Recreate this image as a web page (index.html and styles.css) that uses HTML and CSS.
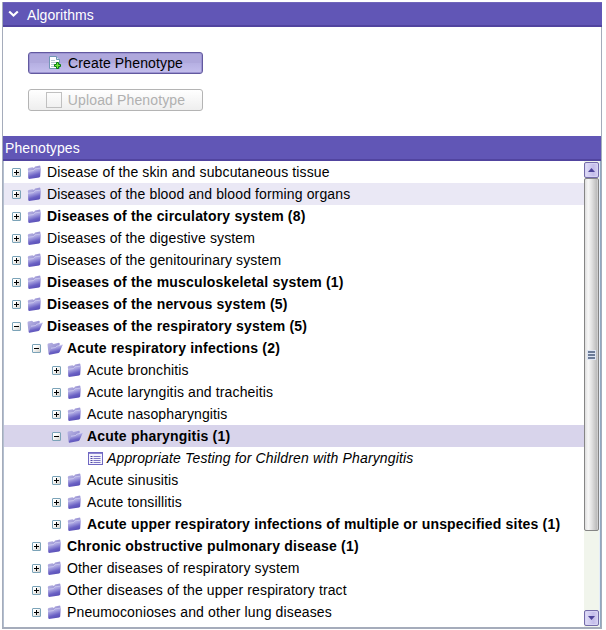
FILE: index.html
```
<!DOCTYPE html>
<html lang="en">
<head>
<meta charset="utf-8">
<title>Phenotypes</title>
<link rel="stylesheet" href="styles.css">
</head>
<body>
<svg class="defs" width="0" height="0" aria-hidden="true">
  <defs>
    <linearGradient id="front" x1="0" y1="0" x2=".35" y2="1"><stop offset="0" stop-color="#c9c6f0"/><stop offset=".4" stop-color="#a7a2e0"/><stop offset=".75" stop-color="#6a61c4"/><stop offset="1" stop-color="#5b51b8"/></linearGradient>
    <linearGradient id="back" x1="0" y1="0" x2="1" y2="1"><stop offset="0" stop-color="#b9b5e4"/><stop offset="1" stop-color="#827ac8"/></linearGradient>
    <linearGradient id="box" x1="0" y1="0" x2="1" y2="1"><stop offset=".3" stop-color="#fff"/><stop offset="1" stop-color="#cfcec8"/></linearGradient>
    <symbol id="closed" viewBox="0 0 16 16"><path d="M.8 5 1.500 4l4-.7L7 4l1-1.600L13 1.500l.5 1.500-.7 9-11 2z" fill="url(#back)"/><path d="M1 7.200 6.500 6.500 8 4.800l5.700-.8-.5 8.500-1 1L2 15l-.7-.8z" fill="url(#front)"/><path d="M1 7.200 6.500 6.500 8 4.800l5.700-.8" fill="none" stroke="#d9d6f5" stroke-width=".6"/></symbol>
    <symbol id="open" viewBox="0 0 16 16"><path d="M.5 4.500 1 3.500l4-.7L6.500 4l5.500-1.200.8.700-.3 2L2.500 14.500l-1-.5z" fill="url(#back)"/><path d="M4 8.200 8.500 7.500 10 6l5.800-1.200L12.500 12.300l-1 .7-9 1.800-.7-.6z" fill="url(#front)"/><path d="M4 8.200 8.500 7.500 10 6l5.800-1.200" fill="none" stroke="#d9d6f5" stroke-width=".6"/></symbol>
    <symbol id="plus" viewBox="0 0 9 9"><rect x=".5" y=".5" width="8" height="8" rx=".5" fill="url(#box)" stroke="#7ba3b8"/><path d="M2 4.500h5M4.500 2v5" stroke="#000"/></symbol>
    <symbol id="minus" viewBox="0 0 9 9"><rect x=".5" y=".5" width="8" height="8" rx=".5" fill="url(#box)" stroke="#7ba3b8"/><path d="M2 4.500h5" stroke="#000"/></symbol>
    <symbol id="list" viewBox="0 0 15 13"><rect x=".5" y=".5" width="14" height="12" fill="#f4f3fc" stroke="#6f67c2"/><path d="M1 1.500h13" stroke="#8e87d0"/><path d="M2.500 4.500h2m-2 2h2m-2 2h2m-2 2h2" stroke="#4a409f"/><path d="M5.500 4.500h7m-7 2h7m-7 2h7m-7 2h7" stroke="#7d76c4"/></symbol>
  </defs>
</svg>
<main class="panel">
  <header class="bar bar-top">
    <svg class="chevron" width="11" height="8" viewBox="0 0 11 8"><path d="m1.200 1.500 4.300 4 4.300-4" fill="none" stroke="#fff" stroke-width="2.200"/></svg>
    <span>Algorithms</span>
  </header>
  <section class="actions">
    <button class="btn btn-primary">
      <svg class="doc" width="14" height="14" viewBox="0 0 14 14"><path d="M1.500.5h7l3 3v9h-10z" fill="#fff" stroke="#7195b5"/><path d="M8.500.5v3h3" fill="#d6e4ef" stroke="#7195b5"/><path d="M3 4.500h4m-4 2h6m-6 2h4m-4 2h3" stroke="#b4c6d4"/><path d="M8.500 6.500h2v2h2v2h-2v2h-2v-2h-2v-2h2z" fill="#72e83c" stroke="#087b13"/></svg>
      <span>Create Phenotype</span>
    </button>
    <button class="btn btn-off" disabled><i class="blank"></i><span>Upload Phenotype</span></button>
  </section>
  <h2 class="bar bar-tree">Phenotypes</h2>
  <div class="content">
    <div class="tree">
      <div class="row"><svg class="tog"><use href="#plus"/></svg><svg class="ico"><use href="#closed"/></svg><span>Disease of the skin and subcutaneous tissue</span></div>
      <div class="row hover"><svg class="tog"><use href="#plus"/></svg><svg class="ico"><use href="#closed"/></svg><span>Diseases of the blood and blood forming organs</span></div>
      <div class="row bold"><svg class="tog"><use href="#plus"/></svg><svg class="ico"><use href="#closed"/></svg><span>Diseases of the circulatory system (8)</span></div>
      <div class="row"><svg class="tog"><use href="#plus"/></svg><svg class="ico"><use href="#closed"/></svg><span>Diseases of the digestive system</span></div>
      <div class="row"><svg class="tog"><use href="#plus"/></svg><svg class="ico"><use href="#closed"/></svg><span>Diseases of the genitourinary system</span></div>
      <div class="row bold"><svg class="tog"><use href="#plus"/></svg><svg class="ico"><use href="#closed"/></svg><span>Diseases of the musculoskeletal system (1)</span></div>
      <div class="row bold"><svg class="tog"><use href="#plus"/></svg><svg class="ico"><use href="#closed"/></svg><span>Diseases of the nervous system (5)</span></div>
      <div class="row bold"><svg class="tog"><use href="#minus"/></svg><svg class="ico"><use href="#open"/></svg><span>Diseases of the respiratory system (5)</span></div>
      <div class="row bold l1"><svg class="tog"><use href="#minus"/></svg><svg class="ico"><use href="#open"/></svg><span>Acute respiratory infections (2)</span></div>
      <div class="row l2"><svg class="tog"><use href="#plus"/></svg><svg class="ico"><use href="#closed"/></svg><span>Acute bronchitis</span></div>
      <div class="row l2"><svg class="tog"><use href="#plus"/></svg><svg class="ico"><use href="#closed"/></svg><span>Acute laryngitis and tracheitis</span></div>
      <div class="row l2"><svg class="tog"><use href="#plus"/></svg><svg class="ico"><use href="#closed"/></svg><span>Acute nasopharyngitis</span></div>
      <div class="row bold l2 selected"><svg class="tog"><use href="#minus"/></svg><svg class="ico"><use href="#open"/></svg><span>Acute pharyngitis (1)</span></div>
      <div class="row leaf"><svg class="list"><use href="#list"/></svg><span>Appropriate Testing for Children with Pharyngitis</span></div>
      <div class="row l2"><svg class="tog"><use href="#plus"/></svg><svg class="ico"><use href="#closed"/></svg><span>Acute sinusitis</span></div>
      <div class="row l2"><svg class="tog"><use href="#plus"/></svg><svg class="ico"><use href="#closed"/></svg><span>Acute tonsillitis</span></div>
      <div class="row bold l2"><svg class="tog"><use href="#plus"/></svg><svg class="ico"><use href="#closed"/></svg><span>Acute upper respiratory infections of multiple or unspecified sites (1)</span></div>
      <div class="row bold l1"><svg class="tog"><use href="#plus"/></svg><svg class="ico"><use href="#closed"/></svg><span>Chronic obstructive pulmonary disease (1)</span></div>
      <div class="row l1"><svg class="tog"><use href="#plus"/></svg><svg class="ico"><use href="#closed"/></svg><span>Other diseases of respiratory system</span></div>
      <div class="row l1"><svg class="tog"><use href="#plus"/></svg><svg class="ico"><use href="#closed"/></svg><span>Other diseases of the upper respiratory tract</span></div>
      <div class="row l1"><svg class="tog"><use href="#plus"/></svg><svg class="ico"><use href="#closed"/></svg><span>Pneumoconioses and other lung diseases</span></div>
    </div>
    <div class="scroll">
      <div class="arrow"><svg width="7" height="4" viewBox="0 0 7 4"><path d="M0 4 3.500 0 7 4z" fill="#4d4399"/></svg></div>
      <div class="thumb"><svg width="9" height="10" viewBox="0 0 9 10"><path d="M0 0h9v10H0z" fill="#dde5f3"/><path d="M1 2h7M1 5h7M1 8h7" stroke="#6c7c98" stroke-width="1.800"/></svg></div>
      <div class="arrow arrow-down"><svg width="7" height="4" viewBox="0 0 7 4"><path d="M0 0h7L3.500 4z" fill="#4d4399"/></svg></div>
    </div>
  </div>
</main>
</body>
</html>
```
FILE: styles.css
```
* { box-sizing: border-box; }
body { margin: 0; background: #fff; color: #000; font: 14px/22px "Liberation Sans", Arial, sans-serif; }
.defs { position: absolute; }
.panel { width: 600px; height: 627px; margin: 2px 0 0 2px; border: solid #a5acbb; border-width: 0 1px 2px; display: flex; flex-direction: column; }
.bar { display: flex; align-items: center; margin: 0; color: #fff; background: #6156b6; border-bottom: 2px solid #51449f; font-size: 14px; font-weight: normal; letter-spacing: .08px; }
.bar-top { height: 25px; margin: 0 -1px 0 0; padding: 2px 0 0 5px; border-top: 1px solid #7066bb; }
.chevron { margin: 0 8px 3px 0; }
.actions { height: 109px; padding: 25px; display: flex; flex-direction: column; gap: 15px; }
.btn { width: 175px; height: 22px; padding: 0; border-radius: 3px; display: flex; align-items: center; justify-content: center; font: 14px/18px "Liberation Sans", Arial, sans-serif; letter-spacing: .13px; }
.btn-primary { color: #000; border: 1px solid #62599f; background: linear-gradient(#afa8dc 0 50%, #b5afe2 50%, #c4bfed); box-shadow: inset 0 0 0 1px #9c94d2; }
.doc { margin-right: 6px; }
.btn-off { color: #b0b0b0; border: 1px solid #b4b4b4; background: linear-gradient(#fff, #eeeeee); }
.blank { width: 16px; height: 16px; border: 1px solid #c0c0c0; margin-right: 6px; }
.bar-tree { height: 25px; padding-left: 2px; }
.content { flex: 1; display: flex; min-height: 0; border-left: 1px solid #b3bfd0; border-right: 1px solid #91a8c0; }
.tree { flex: 1; min-width: 0; letter-spacing: .13px; }
.row { height: 22px; display: flex; align-items: center; padding-left: 8px; white-space: nowrap; }
.bold { font-weight: bold; letter-spacing: .19px; }
.l1 { padding-left: 28px; }
.l2 { padding-left: 48px; }
.leaf { padding-left: 84px; font-style: italic; letter-spacing: .15px; }
.hover { background: #eae8f5; }
.selected { background: #d8d4eb; }
.tog { width: 9px; height: 9px; flex: none; margin-right: 6px; }
.ico { width: 16px; height: 16px; flex: none; margin-right: 4px; }
.list { width: 15px; height: 13px; flex: none; margin-right: 4px; }
.scroll { width: 16px; padding: 1px 1px 1px 0; display: flex; flex-direction: column; background: linear-gradient(90deg, #f1f5ec 15px, #e5edf8 15px); }
.arrow { height: 16px; border: 1px solid #746ba9; border-radius: 2px; background: linear-gradient(90deg, #e1def8, #c4bdea 65%, #d7d1f2); box-shadow: inset 0 0 0 1px #d7d3f3; display: flex; align-items: center; justify-content: center; }
.thumb { height: 353px; border: 1px solid #858585; border-radius: 2px; background: linear-gradient(90deg, #dedede, #f7f7f7 25%, #e3e3e3 50%, #bcbcbc 90%, #d8d8d8); display: flex; align-items: center; justify-content: center; }
.arrow-down { margin-top: auto; }
```
